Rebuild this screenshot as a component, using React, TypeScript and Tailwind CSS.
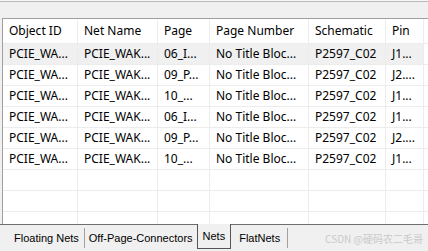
import React from 'react';

const columns = [
  { title: 'Object ID', w: 'w-[75px]' },
  { title: 'Net Name', w: 'w-[80px]' },
  { title: 'Page', w: 'w-[52px]' },
  { title: 'Page Number', w: 'w-[99px]' },
  { title: 'Schematic', w: 'w-[77px]' },
  { title: 'Pin', w: 'w-[38px]' },
];

const rows = [
  ['PCIE_WA...', 'PCIE_WAK...', '06_I...', 'No Title Bloc...', 'P2597_C02', 'J1...'],
  ['PCIE_WA...', 'PCIE_WAK...', '09_P...', 'No Title Bloc...', 'P2597_C02', 'J2....'],
  ['PCIE_WA...', 'PCIE_WAK...', '10_...', 'No Title Bloc...', 'P2597_C02', 'J1...'],
  ['PCIE_WA...', 'PCIE_WAK...', '06_I...', 'No Title Bloc...', 'P2597_C02', 'J1...'],
  ['PCIE_WA...', 'PCIE_WAK...', '09_P...', 'No Title Bloc...', 'P2597_C02', 'J2....'],
  ['PCIE_WA...', 'PCIE_WAK...', '10_...', 'No Title Bloc...', 'P2597_C02', 'J1...'],
];

export default function App() {
  return (
    <div
      className="w-[428px] h-[251px] overflow-hidden bg-[#f0f0f0] flex flex-col"
      style={{ fontFamily: '"Noto Sans", "Noto Sans CJK SC", sans-serif' }}
    >
      <div className="h-[1px] shrink-0 bg-[#f7f7f7]" />
      <div className="h-[1px] shrink-0 bg-[#b9b9b9]" />
      <div className="h-[16px] shrink-0" />

      {/* grid */}
      <div className="h-[206px] shrink-0 ml-[2px] border-l border-t border-[#a0a0a0] bg-white overflow-hidden flex flex-col">
        <div className="flex h-[25px] shrink-0 border-b border-[#ececec] text-[12px] text-black">
          {columns.map(c => (
            <div key={c.title} className={`${c.w} shrink-0 border-r border-[#ececec] px-[6px] flex items-center whitespace-nowrap`}>
              {c.title}
            </div>
          ))}
          <div className="flex-1" />
        </div>
        {rows.map((r, i) => (
          <div key={i} className={`flex h-[21px] shrink-0 border-b border-[#ececec] text-[12px] text-black ${i === 0 ? 'bg-[#f0f0f0]' : ''}`}>
            {r.map((cell, j) => (
              <div key={j} className={`${columns[j].w} shrink-0 border-r border-[#ececec] px-[6px] flex items-center whitespace-nowrap overflow-hidden`}>
                {cell}
              </div>
            ))}
            <div className="flex-1 bg-white" />
          </div>
        ))}
        {[0, 1, 2].map(i => (
          <div key={i} className="flex h-[21px] border-b border-[#ececec] shrink-0">
            {columns.map(c => (
              <div key={c.title} className={`${c.w} shrink-0 border-r border-[#ececec]`} />
            ))}
          </div>
        ))}
      </div>

      {/* tabs */}
      <div
        className="h-[27px] shrink-0 border-t border-[#6e6e6e] flex items-start text-[11px] text-black whitespace-nowrap"
        style={{ fontFamily: '"Liberation Sans", sans-serif' }}
      >
        <div className="shrink-0 pl-[14px] pr-[5px] h-[20px] mt-[3px] flex items-center border-r border-[#a0a0a0]">Floating Nets</div>
        <div className="shrink-0 pl-[4px] pr-[4px] h-[20px] mt-[3px] flex items-center">Off-Page-Connectors</div>
        <div className="shrink-0 -mt-[1px] h-[25px] px-[5px] flex items-center border-l border-r border-b border-[#555] bg-[#f0f0f0]">Nets</div>
        <div className="shrink-0 pl-[8px] pr-[7px] h-[20px] mt-[3px] flex items-center border-r border-[#a0a0a0]">FlatNets</div>
        <div className="ml-auto mr-[5px] mt-[6px] text-[10px] text-[#c9c9c9]" style={{ fontFamily: '"Noto Sans CJK SC", sans-serif' }}>
          CSDN @硬码农二毛哥
        </div>
      </div>
    </div>
  );
}
